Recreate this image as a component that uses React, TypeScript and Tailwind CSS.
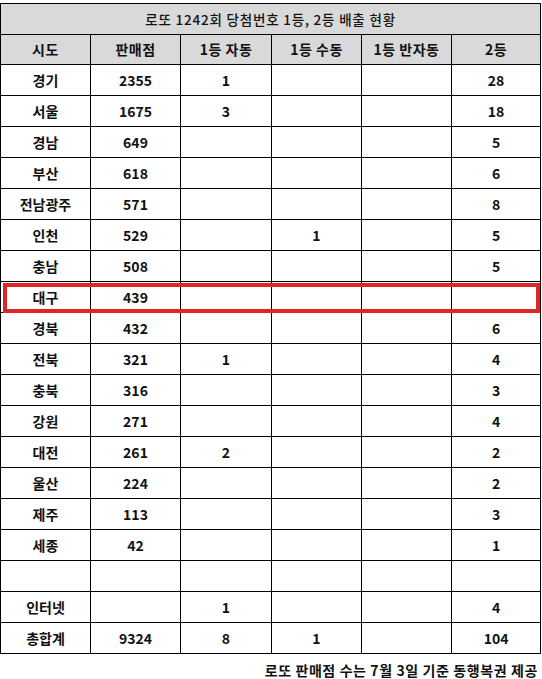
import React from 'react';

const rows: [string, string, string, string, string, string][] = [
    ['경기', '2355', '1', '', '', '28'],
    ['서울', '1675', '3', '', '', '18'],
    ['경남', '649', '', '', '', '5'],
    ['부산', '618', '', '', '', '6'],
    ['전남광주', '571', '', '', '', '8'],
    ['인천', '529', '', '1', '', '5'],
    ['충남', '508', '', '', '', '5'],
    ['대구', '439', '', '', '', ''],
    ['경북', '432', '', '', '', '6'],
    ['전북', '321', '1', '', '', '4'],
    ['충북', '316', '', '', '', '3'],
    ['강원', '271', '', '', '', '4'],
    ['대전', '261', '2', '', '', '2'],
    ['울산', '224', '', '', '', '2'],
    ['제주', '113', '', '', '', '3'],
    ['세종', '42', '', '', '', '1'],
    ['', '', '', '', '', ''],
    ['인터넷', '', '1', '', '', '4'],
    ['총합계', '9324', '8', '1', '', '104'],
];

const headers = ['시도', '판매점', '1등 자동', '1등 수동', '1등 반자동', '2등'];

export default function App() {
    return (
        <div
            className="relative w-[542px] h-[679px] bg-white text-[#111] pt-[3px]"
            style={{ fontFamily: '"Noto Sans CJK KR", "Noto Sans", sans-serif' }}
        >
            <table className="w-[540px] table-fixed border-collapse text-[14px] font-semibold">
                <colgroup>
                    <col className="w-[90px]" />
                    <col className="w-[90px]" />
                    <col className="w-[91px]" />
                    <col className="w-[90px]" />
                    <col className="w-[90px]" />
                    <col className="w-[89px]" />
                </colgroup>
                <thead>
                    <tr className="h-[31px] bg-[#d9d9d9]">
                        <th colSpan={6} className="border border-black text-center font-medium text-[13.5px] tracking-[0.8px] p-0">
                            로또 1242회 당첨번호 1등, 2등 배출 현황
                        </th>
                    </tr>
                    <tr className="h-[30px] bg-[#d9d9d9]">
                        {headers.map((h) => (
                            <th key={h} className="border border-black text-center font-semibold tracking-[0.5px] p-0">
                                {h}
                            </th>
                        ))}
                    </tr>
                </thead>
                <tbody>
                    {rows.map((r, i) => (
                        <tr key={i} className="h-[31px]">
                            {r.map((c, j) => (
                                <td key={j} className="border border-black text-center p-0">
                                    {c}
                                </td>
                            ))}
                        </tr>
                    ))}
                </tbody>
            </table>

            {/* 대구 highlight */}
            <div className="absolute left-[3px] top-[283px] w-[537px] h-[30px] border-[4px] border-[#de2529]" />

            <p className="text-right pr-[4px] mt-[6px] text-[14px] font-semibold tracking-[0.6px]">
                로또 판매점 수는 7월 3일 기준 동행복권 제공
            </p>
        </div>
    );
}
